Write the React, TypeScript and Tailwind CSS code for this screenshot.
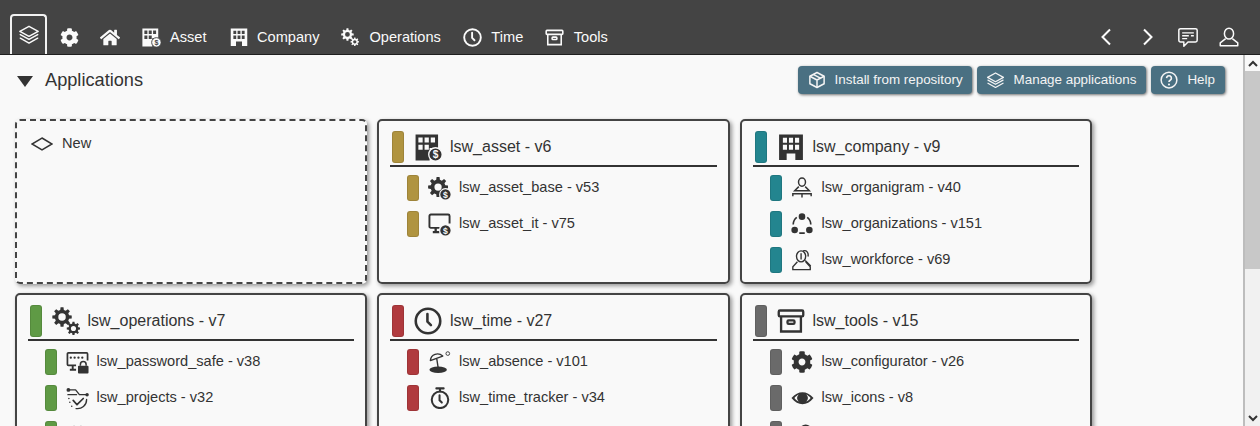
import type { ReactNode } from 'react';
import { FaCog, FaHome } from 'react-icons/fa';

const DARK = '#333333';
const PAGE = '#f9f9f9';

// toothed outline with a round hole, used by every gear icon
function gearPath(cx: number, cy: number, r: number, hole: number, teeth = 8) {
  const step = (Math.PI * 2) / teeth;
  const inner = r * 0.74;
  const pts: string[] = [];
  for (let i = 0; i < teeth; i++) {
    const a = i * step;
    const spots: Array<[number, number]> = [
      [inner, a - step * 0.32],
      [r, a - step * 0.19],
      [r, a + step * 0.19],
      [inner, a + step * 0.32],
    ];
    spots.forEach(([d, t]) =>
      pts.push(`${(cx + d * Math.cos(t)).toFixed(2)} ${(cy + d * Math.sin(t)).toFixed(2)}`),
    );
  }
  return `M${pts.join('L')}Z M${cx - hole} ${cy}a${hole} ${hole} 0 1 0 ${hole * 2} 0a${hole} ${hole} 0 1 0 ${-hole * 2} 0Z`;
}

function Svg({ size, children }: { size: number; children: ReactNode }) {
  return (
    <svg width={size} height={size} viewBox="0 0 24 24" fill="none" stroke="none" className="shrink-0">
      {children}
    </svg>
  );
}

function Dollar({ bg }: { bg: string }) {
  return (
    <g>
      <circle cx="18.2" cy="18.2" r="6" fill="currentColor" stroke={bg} strokeWidth="1.2" />
      <text x="18.2" y="21.4" textAnchor="middle" fontSize="9" fontWeight="700" fill={bg} fontFamily="Liberation Sans">
        $
      </text>
    </g>
  );
}

function LayersIcon({ size = 24 }: { size?: number }) {
  return (
    <Svg size={size}>
      <g stroke="currentColor" strokeWidth="1.6" strokeLinejoin="round" strokeLinecap="round">
        <path d="M12 2.5 22 8l-10 5.5L2 8z" />
        <path d="M2.5 11.5 12 16.8l9.5-5.3" />
        <path d="M2.5 15.5 12 20.8l9.5-5.3" />
      </g>
    </Svg>
  );
}

function BuildingDollar({ size = 24, bg = PAGE }: { size?: number; bg?: string }) {
  return (
    <Svg size={size}>
      <path
        fillRule="evenodd"
        fill="currentColor"
        d="M0.5 0.5h20v12H13v11H0.500zM3 3v4.500h3.800V3zM8.500 3v4.500h3.800V3zM14 3v4.500h3.800V3zM3 9.500v4.500h3.800V9.500zM8.500 9.500v4.500h3.800V9.500z"
      />
      <Dollar bg={bg} />
    </Svg>
  );
}

function BuildingIcon({ size = 24 }: { size?: number }) {
  return (
    <Svg size={size}>
      <path
        fillRule="evenodd"
        fill="currentColor"
        d="M1 0.500h22v23.500h-7v-6H8v6H1zM4.500 3.500v4.500h3.800V3.500zM10.100 3.500v4.500h3.800V3.500zM15.700 3.500v4.500h3.800V3.500zM4.500 10v4.500h3.800V10zM10.100 10v4.500h3.800V10zM15.700 10v4.500h3.800V10z"
      />
    </Svg>
  );
}

function GearsIcon({ size = 24 }: { size?: number }) {
  return (
    <Svg size={size}>
      <path fill="currentColor" fillRule="evenodd" d={gearPath(8.6, 8.6, 8.4, 3.2)} />
      <path fill="currentColor" fillRule="evenodd" d={gearPath(18.4, 18.4, 5.8, 2.2)} />
    </Svg>
  );
}

function GearDollar({ size = 24 }: { size?: number }) {
  return (
    <Svg size={size}>
      <path fill="currentColor" fillRule="evenodd" d={gearPath(10.5, 10.5, 10.5, 3.8)} />
      <Dollar bg={PAGE} />
    </Svg>
  );
}

function MonitorDollar({ size = 24 }: { size?: number }) {
  return (
    <Svg size={size}>
      <path
        d="M12 15.500H3a1.500 1.500 0 0 1-1.500-1.500V3A1.500 1.500 0 0 1 3 1.500h18A1.500 1.500 0 0 1 22.500 3v8"
        stroke="currentColor"
        strokeWidth="2"
      />
      <path d="M8 15.500v4M5 20h7" stroke="currentColor" strokeWidth="2.400" />
      <Dollar bg={PAGE} />
    </Svg>
  );
}

function ClockIcon({ size = 24, sw = 2.4 }: { size?: number; sw?: number }) {
  return (
    <Svg size={size}>
      <circle cx="12" cy="12" r="10.500" stroke="currentColor" strokeWidth={sw} />
      <path d="M11.500 6v6.500l3 3" stroke="currentColor" strokeWidth={sw} strokeLinecap="round" strokeLinejoin="round" />
    </Svg>
  );
}

function ArchiveIcon({ size = 24 }: { size?: number }) {
  return (
    <Svg size={size}>
      <g stroke="currentColor" strokeWidth="2">
        <rect x="1.500" y="3" width="21" height="5" rx="1" />
        <path d="M3.500 8v13h17V8" />
        <rect x="9" y="11.500" width="6" height="3" rx="1" />
      </g>
    </Svg>
  );
}

function PersonDesk({ size = 24 }: { size?: number }) {
  return (
    <Svg size={size}>
      <g stroke="currentColor" strokeWidth="1.600">
        <ellipse cx="12" cy="5.500" rx="3.800" ry="4.500" />
        <path d="M8.500 10.500 4 15h16l-4.500-4.500" />
        <path d="M2 21v-2.700h20v2.700M12 18.300v4" />
      </g>
    </Svg>
  );
}

function CircleNodes({ size = 24 }: { size?: number }) {
  return (
    <Svg size={size}>
      <g fill="currentColor">
        <circle cx="12" cy="4" r="3.600" />
        <circle cx="4" cy="18.500" r="3.600" />
        <circle cx="20" cy="18.500" r="3.600" />
      </g>
      <path
        d="M6.300 4.800A10 10 0 0 0 2.400 12.500M17.700 4.800A10 10 0 0 1 21.600 12.500M9 22h6"
        stroke="currentColor"
        strokeWidth="1.800"
      />
    </Svg>
  );
}

function WorkforceIcon({ size = 24 }: { size?: number }) {
  return (
    <Svg size={size}>
      <g stroke="currentColor" strokeWidth="1.500">
        <ellipse cx="11" cy="8" rx="5" ry="6" />
        <path d="M11 4.500v7M13 2.200c4-1.500 6.500 2 5.500 6M15.500 12.500l6 6" />
        <path d="M7 14 2 19.500v3h19v-3L16 14" />
      </g>
    </Svg>
  );
}

function PasswordIcon({ size = 24 }: { size?: number }) {
  return (
    <Svg size={size}>
      <path
        d="M10.500 15H2.500a1 1 0 0 1-1-1V3a1 1 0 0 1 1-1h19a1 1 0 0 1 1 1v7"
        stroke="currentColor"
        strokeWidth="1.800"
      />
      <path d="M7 15v4M4 19.500h6.500" stroke="currentColor" strokeWidth="2" />
      <path d="M5 7h.01M9 7h.01M13 7h.01M17 7h.01" stroke="currentColor" strokeWidth="2.400" strokeLinecap="round" />
      <rect x="12.500" y="15.500" width="11" height="8" rx="1" fill="currentColor" />
      <path d="M15 15.500v-1.500a3 3 0 0 1 6 0v1.500" stroke="currentColor" strokeWidth="1.600" />
    </Svg>
  );
}

function ProjectsIcon({ size = 24 }: { size?: number }) {
  return (
    <Svg size={size}>
      <g stroke="currentColor" strokeWidth="1.400" strokeLinecap="round" strokeLinejoin="round">
        <path d="M2 3h8l4 5h8M2 8h9" />
        <path d="M7.500 14l4 4.500 6.500-6.500" strokeWidth="1.800" />
        <path d="M21.500 13a9.500 9.500 0 0 1-11 9.500" />
        <path d="M3 12h.01M4 16h.01M6 20h.01" strokeWidth="1.600" />
      </g>
      <g fill="currentColor">
        <circle cx="2.500" cy="3" r="2" />
        <circle cx="22" cy="8" r="1.800" />
      </g>
    </Svg>
  );
}

function BeachIcon({ size = 24 }: { size?: number }) {
  return (
    <Svg size={size}>
      <ellipse cx="10" cy="20.500" rx="9.500" ry="3.500" fill="currentColor" />
      <path
        d="M1.500 10.500C2 3.500 10 1 15 5.500zM8.500 8.500l1.500 10"
        stroke="currentColor"
        strokeWidth="1.500"
        strokeLinejoin="round"
      />
      <circle cx="20.500" cy="2.800" r="2" stroke="currentColor" strokeWidth="1" />
    </Svg>
  );
}

function StopwatchIcon({ size = 24 }: { size?: number }) {
  return (
    <Svg size={size}>
      <circle cx="12" cy="14" r="9" stroke="currentColor" strokeWidth="2.200" />
      <path d="M8 1.500h8M12 1.500V5M11.500 9v5.500l2.500 2.500" stroke="currentColor" strokeWidth="2.200" strokeLinecap="round" />
    </Svg>
  );
}

function EyeIcon({ size = 24 }: { size?: number }) {
  return (
    <Svg size={size}>
      <path
        fillRule="evenodd"
        fill="currentColor"
        d="M0.500 11.500C4 7.500 8 5.500 12 5.500s8 2 11.500 6C20 16 16 18 12 18S4 16 0.500 11.500zM3.500 11.500C5 13.300 6.500 14.500 8 15.200A5.500 5.500 0 0 1 8 7.800C6.500 8.500 5 9.700 3.500 11.500zM16 7.800a5.500 5.500 0 0 1 0 7.400c1.500-.7 3-1.900 4.500-3.700C19 9.700 17.500 8.500 16 7.800z"
      />
    </Svg>
  );
}

// third rows are cut off by the window, only their tops show
function DomeIcon({ size = 24 }: { size?: number }) {
  return (
    <Svg size={size}>
      <path fill="currentColor" d="M1 14C1 6 5 2.500 8.500 2V5h7V2C19 2.500 23 6 23 14v8H1z" />
    </Svg>
  );
}

function RoundTop({ size = 24 }: { size?: number }) {
  return (
    <Svg size={size}>
      <circle cx="16" cy="8" r="6.500" fill="currentColor" />
    </Svg>
  );
}

function CubeIcon({ size = 18 }: { size?: number }) {
  return (
    <Svg size={size}>
      <g stroke="currentColor" strokeWidth="2" strokeLinejoin="round">
        <path d="M12 2 21.500 7v10L12 22 2.500 17V7z" />
        <path d="M2.500 7 12 12l9.500-5M12 12v10M7 4.500l9.500 5" />
      </g>
    </Svg>
  );
}

function HelpIcon({ size = 18 }: { size?: number }) {
  return (
    <Svg size={size}>
      <circle cx="12" cy="12" r="10.500" stroke="currentColor" strokeWidth="2" />
      <path d="M8.800 9.500a3.200 3.200 0 1 1 4.800 2.800c-1 .6-1.600 1.200-1.600 2.400" stroke="currentColor" strokeWidth="2.200" />
      <circle cx="12" cy="18" r="1.400" fill="currentColor" />
    </Svg>
  );
}

function ChatIcon({ size = 20 }: { size?: number }) {
  return (
    <Svg size={size}>
      <path
        d="M3 2h18a2 2 0 0 1 2 2v12a2 2 0 0 1-2 2H12l-5 5v-5H3a2 2 0 0 1-2-2V4a2 2 0 0 1 2-2z"
        stroke="currentColor"
        strokeWidth="1.800"
        strokeLinejoin="round"
      />
      <path d="M5 7h14M5 10.500h8M15.500 10.500H19M5 14h6" stroke="currentColor" strokeWidth="1.600" />
    </Svg>
  );
}

function UserIcon({ size = 20 }: { size?: number }) {
  return (
    <Svg size={size}>
      <ellipse cx="12" cy="8" rx="5.500" ry="6.500" stroke="currentColor" strokeWidth="1.800" />
      <path d="M8 14 1.500 19v3.500h21V19L16 14" stroke="currentColor" strokeWidth="1.800" strokeLinejoin="round" />
    </Svg>
  );
}

function Chevron({ dir }: { dir: 'left' | 'right' }) {
  return (
    <svg width="12" height="18" viewBox="0 0 12 18" fill="none" stroke="currentColor" strokeWidth="2" className="shrink-0">
      <path d={dir === 'left' ? 'M10 1.500 2.500 9l7.500 7.500' : 'M2 1.500 9.500 9 2 16.500'} />
    </svg>
  );
}

function NavItem({ icon, label, className }: { icon: ReactNode; label: string; className: string }) {
  return (
    <div className={`flex items-center ${className}`}>
      {icon}
      <span className="text-[14.600px] leading-none">{label}</span>
    </div>
  );
}

function Header() {
  return (
    <header className="flex h-[55px] shrink-0 items-end border-b border-[#1f1f1f] bg-[#444444] pl-[10px] text-[#fafafa]">
      <div className="flex h-[40px] w-[37px] items-center justify-center rounded-t-[4px] border-2 border-b-0 border-[#f2f2f2]">
        <LayersIcon size={22} />
      </div>
      <div className="flex h-[34px] flex-1 items-center pr-[21px]">
        <div className="ml-[12px] flex w-[20px] justify-center">
          <FaCog size={19} />
        </div>
        <div className="ml-[21px] flex w-[20px] justify-center">
          <FaHome size={21} />
        </div>
        <NavItem className="ml-[22px] gap-[9px]" icon={<BuildingDollar size={19} bg="#444444" />} label="Asset" />
        <NavItem className="ml-[23px] gap-[9.500px]" icon={<BuildingIcon size={18} />} label="Company" />
        <NavItem className="ml-[22px] gap-[10px]" icon={<GearsIcon size={18} />} label="Operations" />
        <NavItem className="ml-[22px] gap-[9.500px]" icon={<ClockIcon size={19} />} label="Time" />
        <NavItem className="ml-[21.500px] gap-[10px]" icon={<ArchiveIcon size={19} />} label="Tools" />
        <div className="ml-auto flex items-center">
          <Chevron dir="left" />
          <div className="ml-[30px]">
            <Chevron dir="right" />
          </div>
          <div className="ml-[24px]">
            <ChatIcon />
          </div>
          <div className="ml-[21px]">
            <UserIcon />
          </div>
        </div>
      </div>
    </header>
  );
}

function ActionButton({ icon, label, className }: { icon: ReactNode; label: string; className: string }) {
  return (
    <button
      className={`flex h-[28px] items-center rounded-[4px] bg-[#4a7082] text-[13.400px] text-[#f4f4f4] shadow-[1px_1px_3px_rgba(0,0,0,0.55)] ${className}`}
    >
      {icon}
      <span>{label}</span>
    </button>
  );
}

function Bar({ color, tall }: { color: string; tall?: boolean }) {
  return (
    <div
      className={`w-[12px] shrink-0 rounded-[3px] border border-black/10 ${tall ? 'h-[32px]' : 'h-[26px]'}`}
      style={{ backgroundColor: color }}
    />
  );
}

interface SubApp {
  name?: string;
  icon: ReactNode;
}

interface AppCard {
  title: string;
  color: string;
  icon: ReactNode;
  items: SubApp[];
}

const cards: AppCard[] = [
  {
    title: 'lsw_asset - v6',
    color: '#b09440',
    icon: <BuildingDollar size={27} />,
    items: [
      { name: 'lsw_asset_base - v53', icon: <GearDollar size={23} /> },
      { name: 'lsw_asset_it - v75', icon: <MonitorDollar size={23} /> },
    ],
  },
  {
    title: 'lsw_company - v9',
    color: '#23858f',
    icon: <BuildingIcon size={26} />,
    items: [
      { name: 'lsw_organigram - v40', icon: <PersonDesk size={22} /> },
      { name: 'lsw_organizations - v151', icon: <CircleNodes size={22} /> },
      { name: 'lsw_workforce - v69', icon: <WorkforceIcon size={22} /> },
    ],
  },
  {
    title: 'lsw_operations - v7',
    color: '#5f9a45',
    icon: <GearsIcon size={28} />,
    items: [
      { name: 'lsw_password_safe - v38', icon: <PasswordIcon size={23} /> },
      { name: 'lsw_projects - v32', icon: <ProjectsIcon size={23} /> },
      { icon: <DomeIcon size={21} /> },
    ],
  },
  {
    title: 'lsw_time - v27',
    color: '#b03a3e',
    icon: <ClockIcon size={28} sw={2.2} />,
    items: [
      { name: 'lsw_absence - v101', icon: <BeachIcon size={22} /> },
      { name: 'lsw_time_tracker - v34', icon: <StopwatchIcon size={22} /> },
    ],
  },
  {
    title: 'lsw_tools - v15',
    color: '#6a6a6a',
    icon: <ArchiveIcon size={28} />,
    items: [
      { name: 'lsw_configurator - v26', icon: <FaCog size={22} /> },
      { name: 'lsw_icons - v8', icon: <EyeIcon size={23} /> },
      { icon: <RoundTop size={22} /> },
    ],
  },
];

function Card({ card }: { card: AppCard }) {
  return (
    <div className="h-[165px] rounded-[5px] border-2 border-[#444444] px-[11px] pt-[10px] shadow-[2px_2px_4px_rgba(0,0,0,0.4)]">
      <div className="flex h-[36px] items-start border-b-2 border-[#333333]">
        <div className="ml-[2px]">
          <Bar color={card.color} tall />
        </div>
        <div className="ml-[10px] flex h-[32px] w-[28px] items-center justify-center">{card.icon}</div>
        <span className="ml-[7.500px] text-[16px] leading-[31px]">{card.title}</span>
      </div>
      <div className="mt-[8px] flex flex-col gap-[10px] pl-[17px]">
        {card.items.map((item, i) => (
          <div key={item.name ?? i} className="flex h-[26px] items-center">
            <Bar color={card.color} />
            <div className="ml-[9px] flex w-[23px] shrink-0 justify-center">{item.icon}</div>
            {item.name && <span className="ml-[7.500px] text-[14.600px]">{item.name}</span>}
          </div>
        ))}
      </div>
    </div>
  );
}

function ScrollBar() {
  return (
    <aside className="flex w-[17px] shrink-0 flex-col border-l-2 border-[#bdbdbd] bg-[#f1f1f1] text-[#333333]">
      <div className="flex h-[16px] items-center justify-center bg-[#f9f9f9]">
        <svg width="10" height="7" viewBox="0 0 10 7" fill="none" stroke="currentColor" strokeWidth="2">
          <path d="M1 6l4-4 4 4" />
        </svg>
      </div>
      <div className="h-[198px] bg-[#c8c8c8]" />
      <div className="flex-1" />
      <div className="flex h-[16px] items-center justify-center">
        <svg width="10" height="7" viewBox="0 0 10 7" fill="none" stroke="currentColor" strokeWidth="2">
          <path d="M1 1l4 4 4-4" />
        </svg>
      </div>
    </aside>
  );
}

export default function App() {
  return (
    <div className="flex h-[426px] w-[1260px] flex-col overflow-hidden bg-[#f9f9f9] font-['Liberation_Sans',sans-serif] text-[#333333]">
      <Header />
      <div className="flex min-h-0 flex-1">
        <main className="min-w-0 flex-1 overflow-hidden pl-[15px] pr-[18px]">
          <div className="flex h-[64px] items-start">
            <div className="flex h-[52px] items-center">
              <div className="ml-[2px] h-0 w-0 border-x-[8px] border-t-[11px] border-x-transparent border-t-[#333333]" />
              <h1 className="ml-[12px] text-[18.200px] font-normal">Applications</h1>
            </div>
            <div className="ml-auto mt-[11px] flex gap-[5px]">
              <ActionButton className="gap-[9px] pl-[10px] pr-[9px]" icon={<CubeIcon />} label="Install from repository" />
              <ActionButton className="gap-[9px] pl-[9px] pr-[10px]" icon={<LayersIcon size={19} />} label="Manage applications" />
              <ActionButton className="gap-[9px] pl-[9px] pr-[10px]" icon={<HelpIcon />} label="Help" />
            </div>
          </div>
          <div className="grid grid-cols-[352.200px_352.200px_352.200px] gap-x-[10.300px] gap-y-[9px]">
            <div className="h-[165px] rounded-[5px] border-2 border-dashed border-[#444444] pl-[14px] pt-[12px] shadow-[2px_2px_4px_rgba(0,0,0,0.4)]">
              <div className="flex items-center gap-[9px]">
                <svg width="22" height="14" viewBox="0 0 22 14" fill="none" stroke={DARK} strokeWidth="1.500">
                  <path d="M11 1l10 6-10 6L1 7z" />
                </svg>
                <span className="text-[14.600px]">New</span>
              </div>
            </div>
            {cards.map(card => (
              <Card key={card.title} card={card} />
            ))}
          </div>
        </main>
        <ScrollBar />
      </div>
    </div>
  );
}
